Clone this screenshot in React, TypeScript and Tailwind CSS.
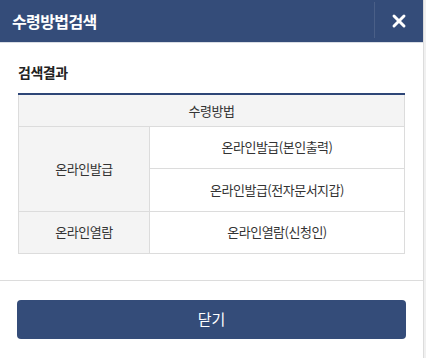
import { X } from "lucide-react";

const FONT = "font-['Noto_Sans_CJK_KR','Noto_Sans',sans-serif]";

export default function App() {
  return (
    <div className={`flex h-[358px] w-[426px] bg-white ${FONT}`}>
      <div className="flex w-[424px] flex-col border-r border-[#dcdcdc]">
        <header className="flex h-[43px] items-center border-b border-[#d9dde4] bg-[#344c79]">
          <h1 className="flex-1 pl-3 text-[16px] font-bold tracking-[-0.6px] text-white">
            수령방법검색
          </h1>
          <div className="h-[36px] w-px self-start mt-[2px] bg-[#4a5f87]" />
          <button type="button" className="flex h-full w-[48px] items-center justify-center text-white">
            <X className="h-[20px] w-[20px]" strokeWidth={3.5} />
          </button>
        </header>

        <section className="h-[238px] border-b border-[#dcdcdc] px-[18px] pt-[19px]">
          <h2 className="text-[14px] font-bold tracking-[-0.5px] text-[#222]">검색결과</h2>
          <table className="mt-[10px] w-[387px] border-collapse border-t-2 border-t-[#2e4677] text-[13px] tracking-[-0.5px] text-[#333]">
            <thead>
              <tr>
                <th colSpan={2} className="h-[32px] border border-t-0 border-[#dcdcdc] bg-[#f4f4f4] font-normal">
                  수령방법
                </th>
              </tr>
            </thead>
            <tbody>
              <tr>
                <td rowSpan={2} className="w-[131px] border border-[#dcdcdc] bg-[#f4f4f4] text-center">
                  온라인발급
                </td>
                <td className="h-[42px] border border-[#dcdcdc] text-center">온라인발급(본인출력)</td>
              </tr>
              <tr>
                <td className="h-[43px] border border-[#dcdcdc] text-center">온라인발급(전자문서지갑)</td>
              </tr>
              <tr>
                <td className="h-[42px] border border-[#dcdcdc] bg-[#f4f4f4] text-center">온라인열람</td>
                <td className="border border-[#dcdcdc] text-center">온라인열람(신청인)</td>
              </tr>
            </tbody>
          </table>
        </section>

        <div className="px-[17px] pt-[19px]">
          <button
            type="button"
            className="h-[39px] w-full rounded-[4px] bg-[#344c79] text-[15px] text-white"
          >
            닫기
          </button>
        </div>
      </div>
      <div className="w-[2px] bg-[#f0f0f0]" />
    </div>
  );
}
